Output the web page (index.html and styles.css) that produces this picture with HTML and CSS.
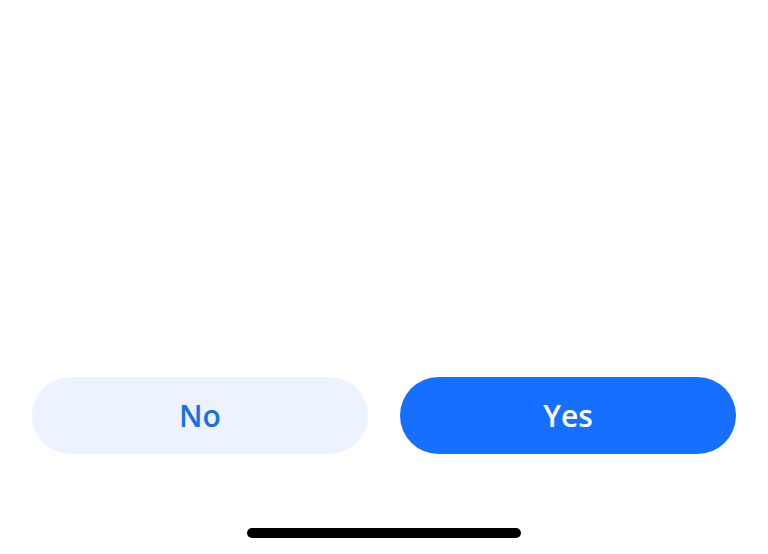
FILE: index.html
```html
<!DOCTYPE html>
<html lang="en">
<head>
<meta charset="utf-8">
<title>Confirm</title>
<link rel="stylesheet" href="styles.css">
</head>
<body>
<main class="screen">
  <div class="content"></div>
  <div class="actions">
    <button class="btn btn-secondary">No</button>
    <button class="btn btn-primary">Yes</button>
  </div>
  <div class="home-indicator"></div>
</main>
</body>
</html>
```

FILE: styles.css
```css
html, body {
  margin: 0;
  padding: 0;
  background: #ffffff;
}

.screen {
  width: 768px;
  height: 554px;
  display: flex;
  flex-direction: column;
  font-family: "Open Sans", "Noto Sans", sans-serif;
}

.content {
  flex: 1;
}

.actions {
  display: flex;
  gap: 32px;
  padding: 0 32px;
  margin-bottom: 74px;
}

.btn {
  flex: 1;
  height: 77px;
  border: none;
  border-radius: 39px;
  font-family: "Open Sans", "Noto Sans", sans-serif;
  font-size: 30px;
  font-weight: 600;
  padding: 0;
  cursor: pointer;
}

.btn-secondary {
  background: #edf3fe;
  color: #1a6fe3;
}

.btn-primary {
  background: #1570ff;
  color: #ffffff;
}

.home-indicator {
  width: 274px;
  height: 10px;
  border-radius: 5px;
  background: #000000;
  margin: 0 auto 16px;
}
```
